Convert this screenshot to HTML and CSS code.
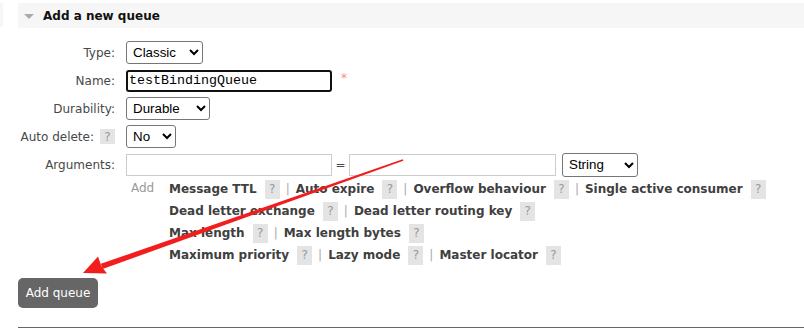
FILE: index.html
```html
<!DOCTYPE html>
<html>
<head>
<meta charset="utf-8">
<link rel="stylesheet" href="styles.css">
</head>
<body>
<div class="page">
  <div class="strip"></div>
  <div class="main">
    <h2 class="section-head"><span class="tri"></span>Add a new queue</h2>
    <form class="form">
      <div class="row">
        <label class="lbl">Type:</label>
        <select class="sel sel-type"><option>Classic</option></select>
      </div>
      <div class="row">
        <label class="lbl">Name:</label>
        <input class="name" type="text" value="testBindingQueue">
        <span class="mand">*</span>
      </div>
      <div class="row">
        <label class="lbl">Durability:</label>
        <select class="sel sel-dur"><option>Durable</option></select>
      </div>
      <div class="row">
        <label class="lbl">Auto delete: <span class="help help-sm">?</span></label>
        <select class="sel sel-no"><option>No</option></select>
      </div>
      <div class="row row-args">
        <label class="lbl">Arguments:</label>
        <input class="arg-in" type="text">
        <span class="eq">=</span>
        <input class="arg-in arg-in2" type="text">
        <select class="sel sel-str"><option>String</option></select>
      </div>
      <div class="args-help">
        <span class="add">Add</span>
        <div class="arg-lines">
          <div class="arg-line">
            <span class="arg">Message TTL</span><span class="help">?</span><span class="sep">|</span>
            <span class="arg">Auto expire</span><span class="help">?</span><span class="sep">|</span>
            <span class="arg">Overflow behaviour</span><span class="help">?</span><span class="sep">|</span>
            <span class="arg">Single active consumer</span><span class="help">?</span>
          </div>
          <div class="arg-line">
            <span class="arg">Dead letter exchange</span><span class="help">?</span><span class="sep">|</span>
            <span class="arg">Dead letter routing key</span><span class="help">?</span>
          </div>
          <div class="arg-line">
            <span class="arg">Max length</span><span class="help">?</span><span class="sep">|</span>
            <span class="arg">Max length bytes</span><span class="help">?</span>
          </div>
          <div class="arg-line">
            <span class="arg">Maximum priority</span><span class="help">?</span><span class="sep">|</span>
            <span class="arg">Lazy mode</span><span class="help">?</span><span class="sep">|</span>
            <span class="arg">Master locator</span><span class="help">?</span>
          </div>
        </div>
      </div>
      <button class="btn" type="button">Add queue</button>
    </form>
    <div class="rule"></div>
  </div>
</div>
<svg class="arrow" width="804" height="330" viewBox="0 0 804 330">
  <polygon fill="#f21d1d" points="403.3,160.7 402.7,159.3 100.8,263.8 102.6,269.0"/>
  <polygon fill="#f21d1d" points="83,273 98,256.5 101.5,266.5 107,273.5"/>
</svg>
</body>
</html>
```
FILE: styles.css
```css
* { box-sizing: border-box; }
html, body { margin: 0; padding: 0; background: #fff; }
body {
  font-family: "DejaVu Sans", Verdana, sans-serif;
  font-size: 12px;
  color: #484848;
  width: 804px;
  height: 330px;
  overflow: hidden;
  position: relative;
}
.page { display: flex; align-items: flex-start; }
.strip { width: 3px; height: 24px; margin-top: 3px; background: #f6f6f6; margin-right: 15px; }
.main { flex: 1; }
.section-head {
  margin: 3px 0 0 0;
  height: 25px;
  background: #f6f6f6;
  display: flex;
  align-items: center;
  padding-left: 6px;
  font-size: 12px;
  font-weight: bold;
  color: #111;
}
.tri {
  width: 0; height: 0;
  border-left: 5px solid transparent;
  border-right: 5px solid transparent;
  border-top: 5px solid #aaa;
  margin-right: 9px;
  margin-top: 1px;
}
.form { margin-top: 13px; }
.row { display: flex; align-items: center; height: 23px; margin-bottom: 5px; }
.row-args { margin-bottom: 2px; }
.lbl {
  width: 97px;
  margin-right: 11px;
  text-align: right;
  color: #484848;
  display: flex;
  justify-content: flex-end;
  align-items: center;
  white-space: nowrap;
}
.sel {
  font-family: "Liberation Sans", Arial, sans-serif;
  font-size: 13.33px;
  height: 23px;
  border: 1px solid #767676;
  border-radius: 3px;
  background: #fff;
  color: #000;
  padding: 0 2px;
}
.sel-type { width: 77px; }
.sel-dur { width: 84px; }
.sel-no { width: 50px; }
.sel-str { width: 76px; height: 24px; margin-left: 6px; }
.name {
  width: 206px;
  height: 22px;
  border: 2px solid #111;
  border-radius: 3px;
  font-family: "Liberation Mono", "Courier New", monospace;
  font-size: 13.33px;
  padding: 0 1px;
  color: #000;
  outline: none;
}
.mand { color: #f88; margin-left: 9px; margin-top: -6px; font-size: 12px; }
.arg-in {
  width: 206px;
  height: 22px;
  border: 1px solid #ccc;
  border-radius: 0;
  padding: 0 2px;
}
.arg-in2 { width: 207px; }
.eq { width: 17px; text-align: center; color: #484848; }
.help {
  display: inline-flex;
  align-items: center;
  justify-content: center;
  width: 15px;
  height: 19px;
  background: #e4e4e4;
  color: #999;
  margin-left: 8px;
  font-weight: normal;
}
.help-sm { width: 15px; height: 15px; margin-left: 6px; }
.args-help { display: flex; align-items: flex-start; }
.add { color: #999; margin-left: 113px; width: 38px; line-height: 20px; }
.arg-lines { display: flex; flex-direction: column; }
.arg-line { display: flex; align-items: center; height: 22px; }
.arg { font-weight: bold; color: #404040; white-space: nowrap; }
.sep { color: #aaa; margin: 0 6px 0 6px; }
.btn {
  display: block;
  margin-top: 12px;
  width: 80px;
  height: 30px;
  background: #666;
  color: #fff;
  border: none;
  border-radius: 5px;
  font-family: "DejaVu Sans", Verdana, sans-serif;
  font-size: 12px;
  padding: 0;
}
.rule { margin-top: 19px; border-top: 1px solid #666; }
.arrow { position: absolute; left: 0; top: 0; pointer-events: none; }
```
